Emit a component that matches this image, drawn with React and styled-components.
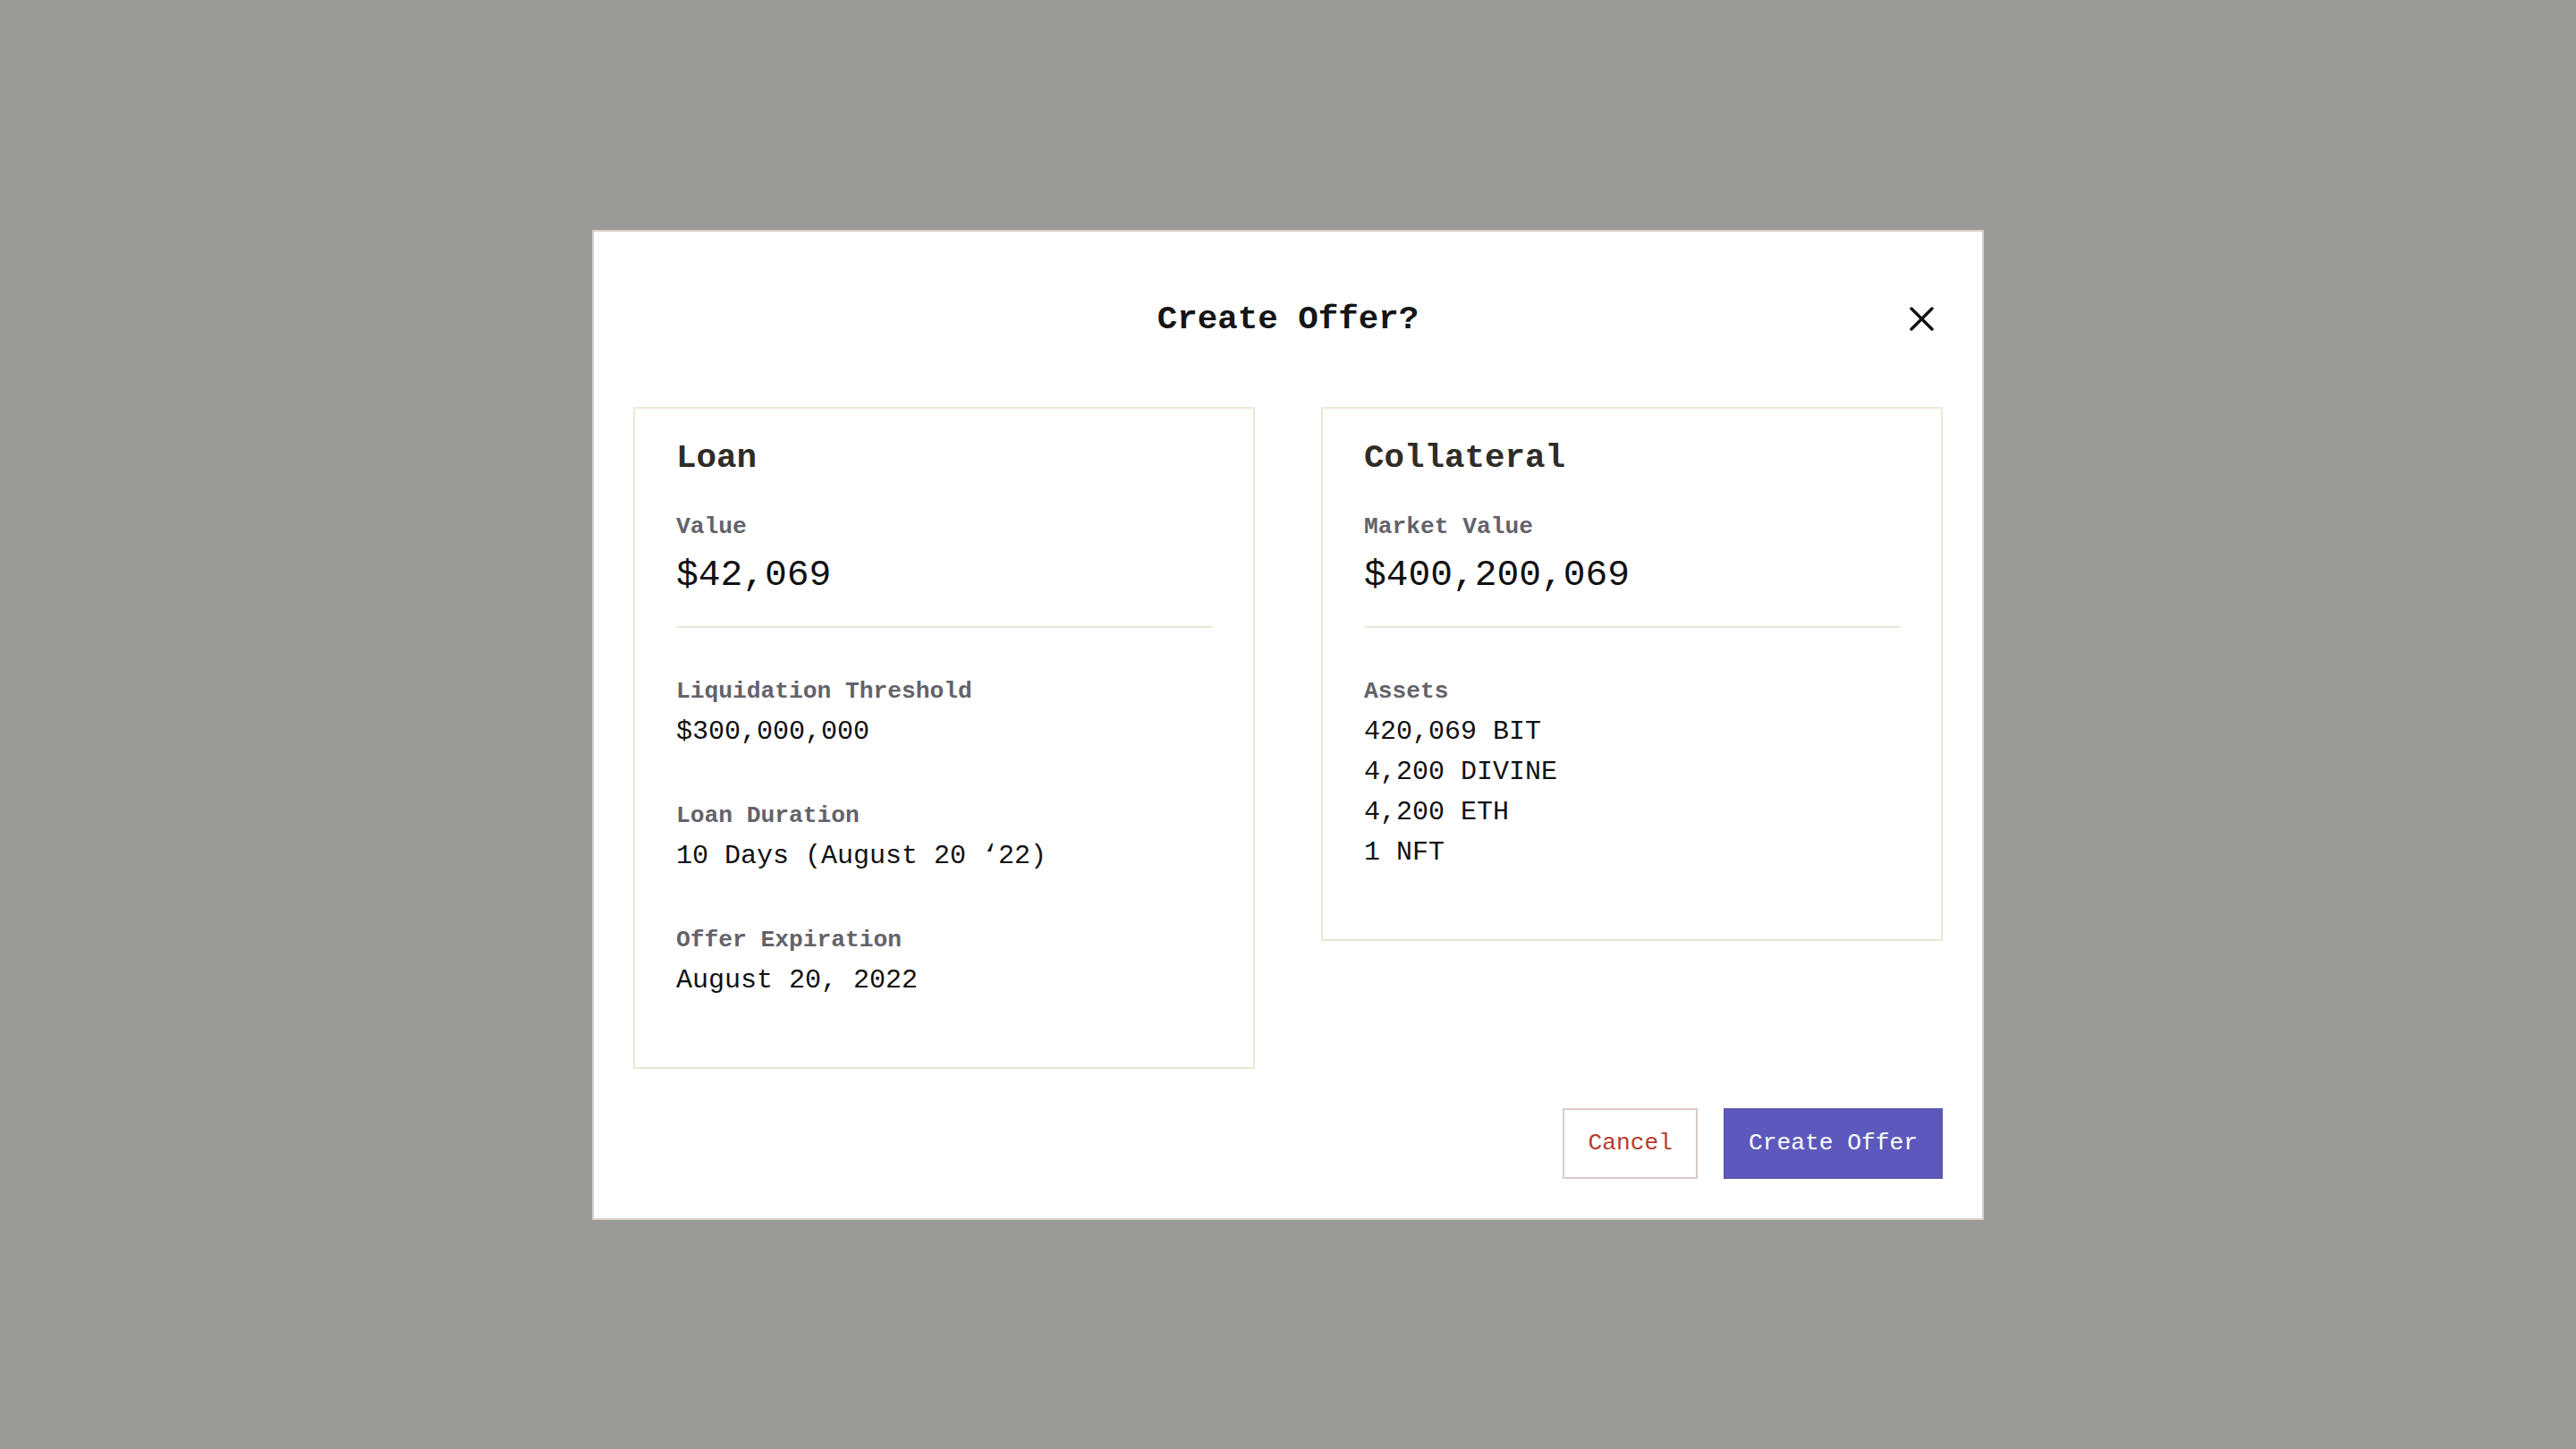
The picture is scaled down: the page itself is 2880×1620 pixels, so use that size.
import React from 'react'
import styled, {createGlobalStyle} from 'styled-components'

const GlobalStyle = createGlobalStyle`
  * { box-sizing: border-box; }
  html, body {
    margin: 0;
    padding: 0;
    background: #9a9b96;
  }
  body {
    font-family: "Liberation Mono", "DejaVu Sans Mono", monospace;
  }
`

const Overlay = styled.div`
  min-height: 100vh;
  display: flex;
  align-items: center;
  justify-content: center;
  background: #9a9b96;
`

const Modal = styled.div`
  width: 1556px;
  background: #fff;
  border: 2px solid #dccfca;
  padding: 0 44px 44px;
  display: flex;
  flex-direction: column;
`

const Header = styled.div`
  height: 196px;
  display: grid;
  grid-template-columns: 1fr auto 1fr;
  align-items: center;
`

const Title = styled.h2`
  grid-column: 2;
  margin: 0;
  font-size: 37.5px;
  line-height: 48px;
  font-weight: 700;
  color: #151515;
`

const CloseButton = styled.button`
  grid-column: 3;
  justify-self: end;
  width: 48px;
  height: 48px;
  padding: 0;
  border: none;
  background: transparent;
  display: flex;
  align-items: center;
  justify-content: center;
  cursor: pointer;
`

const Cards = styled.div`
  display: grid;
  grid-template-columns: 1fr 1fr;
  gap: 74px;
  align-items: start;
`

const Card = styled.section`
  border: 2px solid #eee6d4;
  padding: 31px 45px 74px 46px;
`

const CardTitle = styled.h3`
  margin: 0 0 35px;
  font-size: 37.5px;
  line-height: 48px;
  font-weight: 700;
  color: #2f2c27;
`

const Label = styled.div`
  font-size: 26.25px;
  line-height: 36px;
  font-weight: 700;
  color: #64626a;
  margin-bottom: ${p => (p.$big ? '9px' : '5px')};
`

const BigValue = styled.div`
  font-size: 41.25px;
  line-height: 54px;
  color: #111;
`

const Divider = styled.hr`
  margin: 30px 0 0;
  border: none;
  border-top: 2px solid #efe8d8;
`

const Sections = styled.div`
  display: flex;
  flex-direction: column;
  gap: 53px;
  padding-top: 53px;
`

const Value = styled.div`
  font-size: 30px;
  line-height: 45px;
  color: #111;
`

const Footer = styled.div`
  display: flex;
  justify-content: flex-end;
  gap: 29px;
  margin-top: 44px;
`

const Button = styled.button`
  height: 79px;
  padding: 0 26px;
  font-family: "Liberation Mono", "DejaVu Sans Mono", monospace;
  font-size: 26.25px;
  border: 2px solid ${p => (p.$primary ? '#5a56b0' : '#dacbc3')};
  background: ${p => (p.$primary ? '#5d59bc' : '#fff')};
  color: ${p => (p.$primary ? '#fff' : '#b83a2d')};
  cursor: pointer;
`

const Field = ({label, children}) => (
  <div>
    <Label>{label}</Label>
    {children}
  </div>
)

const loanFields = [
  {label: 'Liquidation Threshold', value: '$300,000,000'},
  {label: 'Loan Duration', value: '10 Days (August 20 \u201822)'},
  {label: 'Offer Expiration', value: 'August 20, 2022'},
]

const assets = ['420,069 BIT', '4,200 DIVINE', '4,200 ETH', '1 NFT']

const App = () => {
  return (
    <Overlay>
      <GlobalStyle />
      <Modal>
        <Header>
          <Title>Create Offer?</Title>
          <CloseButton aria-label="Close">
            <svg width="27" height="27" viewBox="0 0 27 27">
              <path d="M2 2 L25 25 M25 2 L2 25" stroke="#111" strokeWidth="3.4" strokeLinecap="round" />
            </svg>
          </CloseButton>
        </Header>

        <Cards>
          <Card>
            <CardTitle>Loan</CardTitle>
            <Label $big>Value</Label>
            <BigValue>$42,069</BigValue>
            <Divider />
            <Sections>
              {loanFields.map(f => (
                <Field key={f.label} label={f.label}>
                  <Value>{f.value}</Value>
                </Field>
              ))}
            </Sections>
          </Card>

          <Card>
            <CardTitle>Collateral</CardTitle>
            <Label $big>Market Value</Label>
            <BigValue>$400,200,069</BigValue>
            <Divider />
            <Sections>
              <Field label="Assets">
                {assets.map(a => (
                  <Value key={a}>{a}</Value>
                ))}
              </Field>
            </Sections>
          </Card>
        </Cards>

        <Footer>
          <Button>Cancel</Button>
          <Button $primary>Create Offer</Button>
        </Footer>
      </Modal>
    </Overlay>
  )
}

export default App
